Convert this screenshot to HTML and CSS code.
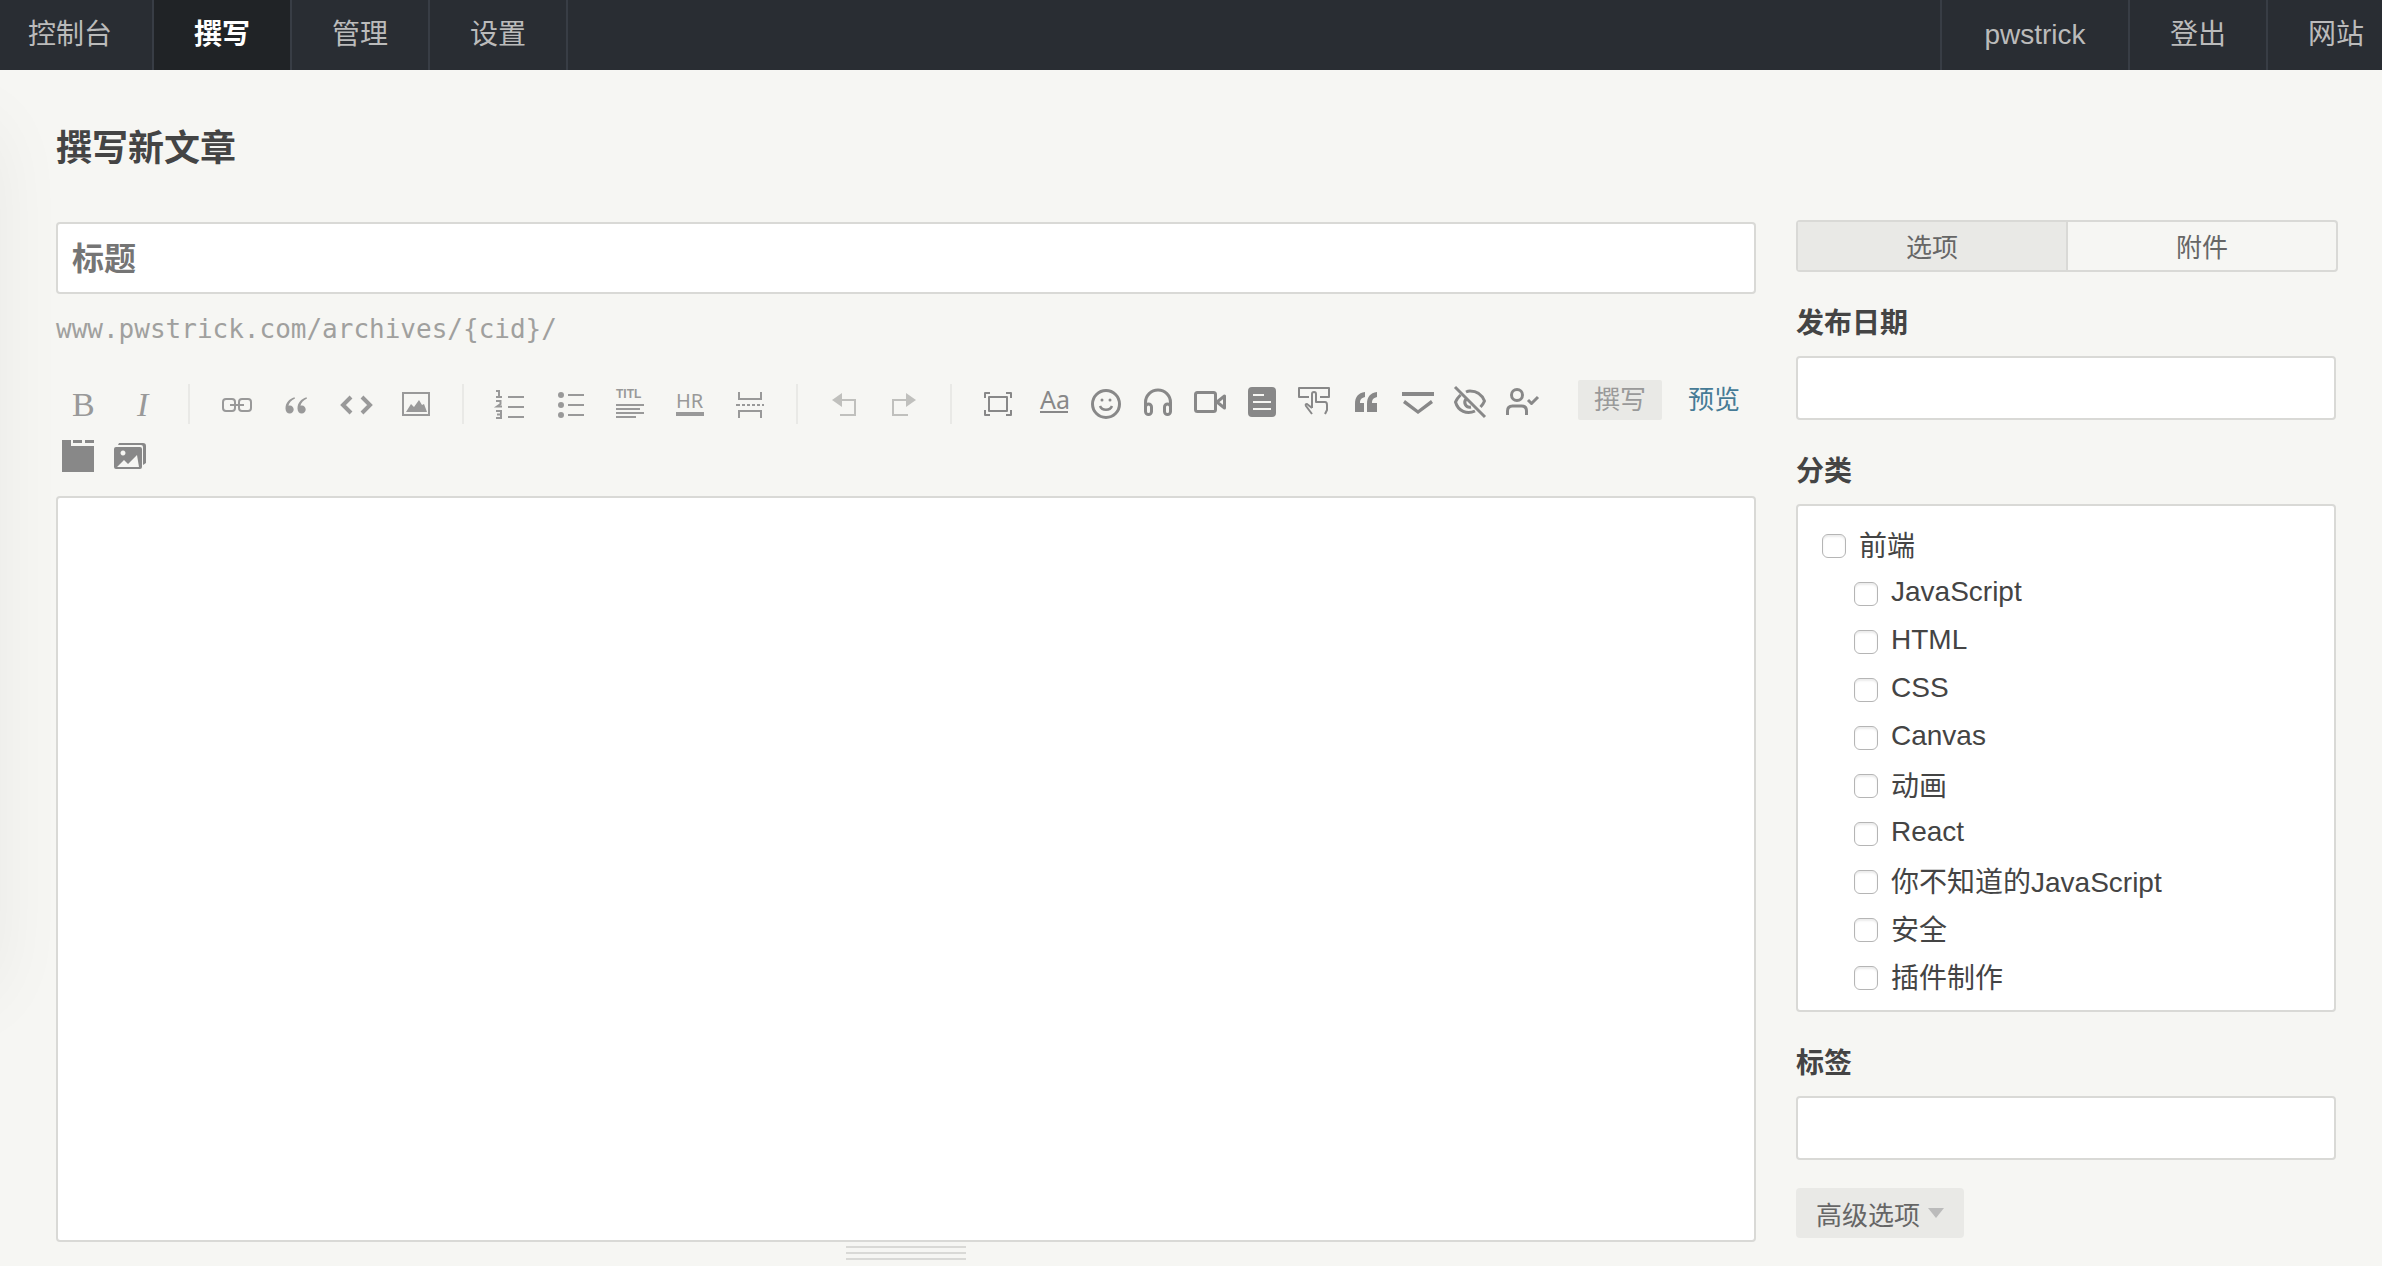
FILE: index.html
```html
<!DOCTYPE html>
<html lang="zh-CN">
<head>
<meta charset="utf-8">
<title>撰写新文章</title>
<meta name="viewport" content="width=device-width, initial-scale=1">
<link rel="stylesheet" href="styles.css">
</head>
<body>
<nav class="topnav">
  <div class="topnav-group">
    <a class="topnav-item topnav-first" href="#">控制台</a>
    <a class="topnav-item is-active" href="#">撰写</a>
    <a class="topnav-item" href="#">管理</a>
    <a class="topnav-item" href="#">设置</a>
  </div>
  <div class="topnav-group topnav-right">
    <a class="topnav-item topnav-user" href="#">pwstrick</a>
    <a class="topnav-item" href="#">登出</a>
    <a class="topnav-item topnav-last" href="#">网站</a>
  </div>
</nav>
<main class="page">
  <h1 class="page-title">撰写新文章</h1>
  <form class="columns">
    <section class="editor">
      <input class="field title-field" type="text" placeholder="标题" aria-label="标题">
      <p class="slug">www.pwstrick.com/archives/{cid}/</p>
      <div class="editbar">
        <div class="toolbar">
          <button class="tool" type="button" aria-label="加粗"><svg viewBox="0 0 40 40"><text class="serif" x="10" y="32">B</text></svg></button>
          <button class="tool" type="button" aria-label="斜体"><svg viewBox="0 0 40 40"><text class="serif italic" x="15" y="32">I</text></svg></button>
          <span class="divider"></span>
          <button class="tool" type="button" aria-label="链接"><svg viewBox="0 0 40 40" class="line"><rect x="7" y="15" width="12" height="12" rx="3"/><rect x="23" y="15" width="12" height="12" rx="3"/><path d="M14 21h14"/></svg></button>
          <button class="tool" type="button" aria-label="引用"><svg viewBox="0 0 40 40"><path d="M18.500 13.300C13 15 9.500 19 9.500 24.500c0 3 1.800 5 4.200 5 2.300 0 4-1.700 4-4s-1.700-4-3.800-4c-.7 0-1.200.2-1.500.3.600-3 2.800-5.700 6.600-7.400z"/><path d="M30.500 13.300C25 15 21.500 19 21.500 24.500c0 3 1.800 5 4.200 5 2.300 0 4-1.700 4-4s-1.700-4-3.800-4c-.7 0-1.200.2-1.500.3.600-3 2.800-5.700 6.600-7.400z"/></svg></button>
          <button class="tool" type="button" aria-label="代码"><svg viewBox="0 0 40 40" class="line thick"><path d="M15 13l-8 8 8 8M26 13l8 8-8 8"/></svg></button>
          <button class="tool" type="button" aria-label="图片"><svg viewBox="0 0 40 40"><path fill-rule="evenodd" d="M6 8h28v24H6zM8 10v20h24V10z"/><path d="M10 28l5-8 3 3 5-7 3 5 2-1 3 8z"/></svg></button>
          <span class="divider"></span>
          <button class="tool" type="button" aria-label="有序列表"><svg viewBox="0 0 40 40"><path d="M18 12h16v2H18zM18 22h16v2H18zM18 32h16v2H18z"/><path class="digits" d="M6 7h3v6M6 13h6M6 17h4.500v3L7 22.500h5M6 27h5v7H6M7 30.500h4"/></svg></button>
          <button class="tool" type="button" aria-label="无序列表"><svg viewBox="0 0 40 40"><circle cx="11" cy="11" r="3"/><circle cx="11" cy="21" r="3"/><circle cx="11" cy="31" r="3"/><path d="M18 10h16v2H18zM18 20h16v2H18zM18 30h16v2H18z"/></svg></button>
          <button class="tool" type="button" aria-label="标题"><svg viewBox="0 0 40 40"><text class="tiny" x="6" y="14">TITL</text><path d="M6 20h28v2H6zM6 24h24v2H6zM6 28h28v2H6zM6 32h20v2H6z"/></svg></button>
          <button class="tool" type="button" aria-label="分割线"><svg viewBox="0 0 40 40"><text class="small" x="6" y="24">HR</text><path d="M6 28h28v4H6z"/></svg></button>
          <button class="tool" type="button" aria-label="摘要分割线"><svg viewBox="0 0 40 40"><path d="M8 8h2v6h20V8h2v8H8zM8 26h24v8h-2v-6H10v6H8zM6 20h4v2H6zM12 20h3v2h-3zM17 20h3v2h-3zM22 20h3v2h-3zM27 20h3v2h-3zM32 20h2v2h-2z"/></svg></button>
          <span class="divider"></span>
          <button class="tool is-faint" type="button" aria-label="撤销"><svg viewBox="0 0 40 40"><path d="M8 16l10-7v14z"/><path d="M18 15h14v17H16v-2h14V17H18z"/></svg></button>
          <button class="tool is-faint" type="button" aria-label="重做"><svg viewBox="0 0 40 40"><path d="M32 16l-10-7v14z"/><path d="M22 15H8v17h16v-2H10V17h12z"/></svg></button>
          <span class="divider"></span>
          <button class="tool is-dark" type="button" aria-label="全屏"><svg viewBox="0 0 40 40" class="line"><path d="M11 13h18v14H11zM7 14V9h5M28 9h5v5M33 26v5h-5M12 31H7v-5"/></svg></button>
          <button class="tool tool-extra" type="button" aria-label="字体"><svg viewBox="0 0 40 40"><text class="font-sample" x="6" y="25">Aa</text><path d="M6 27h28v2H6z"/></svg></button>
          <button class="tool tool-extra" type="button" aria-label="表情"><svg viewBox="0 0 40 40" class="line"><circle class="ring" cx="20" cy="20" r="13.500"/><circle class="dot" cx="16" cy="16" r="1.500"/><circle class="dot" cx="24" cy="16" r="1.500"/><path d="M14 22c2 5 10 5 12 0" stroke-width="2.500"/></svg></button>
          <button class="tool tool-extra" type="button" aria-label="音频"><svg viewBox="0 0 40 40" class="line heavy"><path d="M7.500 24v-5.500a12.500 12.500 0 0 1 25 0V24"/><rect x="7.500" y="20" width="6" height="10.500" rx="3"/><rect x="26.500" y="20" width="6" height="10.500" rx="3"/></svg></button>
          <button class="tool tool-extra" type="button" aria-label="视频"><svg viewBox="0 0 40 40" class="line heavy"><rect x="5.500" y="8.500" width="20" height="19" rx="2"/><path d="M27 18l7.500-6v12z"/></svg></button>
          <button class="tool tool-extra" type="button" aria-label="文档"><svg viewBox="0 0 40 40"><path fill-rule="evenodd" d="M10 3h20a4 4 0 0 1 4 4v22a4 4 0 0 1-4 4H10a4 4 0 0 1-4-4V7a4 4 0 0 1 4-4zM11 10v2h11v-2zM11 17v2h18v-2zM11 24v2h18v-2z"/></svg></button>
          <button class="tool tool-extra" type="button" aria-label="按钮"><svg viewBox="0 0 40 40" class="line"><path d="M15 13H5V4h30v9h-9"/><path d="M18 24V10q0-2 2-2t2 2v8h9q2 0 2 3v5l-2 4M18 24l-5-4q-2 0-1 2l6 8"/></svg></button>
          <button class="tool tool-extra" type="button" aria-label="引文"><svg viewBox="0 0 40 40"><path d="M19 8C12 9 9 13 9 20v8h9v-9h-4c0-3 1-5 5-6zM31 8c-7 1-10 5-10 12v8h10v-9h-5c0-3 1-5 5-6z"/></svg></button>
          <button class="tool tool-extra" type="button" aria-label="折叠"><svg viewBox="0 0 40 40"><path d="M4 8h32v4H4zM7 16l13 10 13-10 2 3-15 11L5 19z"/></svg></button>
          <button class="tool tool-extra" type="button" aria-label="隐藏"><svg viewBox="0 0 40 40" class="line heavy"><path d="M5 3l30 30M16 8q2-1 4-1c7 0 12 4 14.500 10-1 2.500-2 4-4 6M25 27c-8 4-17 0-19.500-9 1-3 3-5 5-7M16 15c-3 4 0 9 5 8"/></svg></button>
          <button class="tool tool-extra" type="button" aria-label="作者"><svg viewBox="0 0 40 40" class="line heavy"><circle cx="15" cy="11" r="5.500"/><path d="M5.500 31v-4q0-5 5-5h9q5 0 5 5v4M26 16l3.500 3.500L36 13"/></svg></button>
          <button class="tool tool-extra" type="button" aria-label="标签页"><svg viewBox="0 0 40 40"><path d="M4 4h9v6h23v26H4zM15 4h9v3h-9zM27 4h9v3h-9z"/></svg></button>
          <button class="tool tool-extra" type="button" aria-label="相册"><svg viewBox="0 0 40 40"><path fill-rule="evenodd" d="M6 11h24a2 2 0 0 1 2 2v18a2 2 0 0 1-2 2H6a2 2 0 0 1-2-2V13a2 2 0 0 1 2-2zM13 14.500a2.500 2.500 0 1 0 .01 0zM7 31h22l-2-12-9 9-4-4z"/><path d="M8 9l1-2h24a3 3 0 0 1 3 3v17l-3 2V11q0-2-2-2z"/></svg></button>
        </div>
        <div class="modes">
          <button class="mode is-active" type="button">撰写</button>
          <button class="mode" type="button">预览</button>
        </div>
      </div>
      <textarea class="field content-field" aria-label="内容"></textarea>
      <div class="grip"></div>
    </section>
    <aside class="options">
      <div class="tabs">
        <button class="tab is-active" type="button">选项</button>
        <button class="tab" type="button">附件</button>
      </div>
      <label class="caption" for="date">发布日期</label>
      <input class="field text-field" id="date" type="text">
      <div class="caption" id="category-caption">分类</div>
      <ul class="categories" aria-labelledby="category-caption">
        <li><label class="category"><input class="check" type="checkbox">前端</label>
          <ul class="subcategories">
            <li><label class="category"><input class="check" type="checkbox">JavaScript</label></li>
            <li><label class="category"><input class="check" type="checkbox">HTML</label></li>
            <li><label class="category"><input class="check" type="checkbox">CSS</label></li>
            <li><label class="category"><input class="check" type="checkbox">Canvas</label></li>
            <li><label class="category"><input class="check" type="checkbox">动画</label></li>
            <li><label class="category"><input class="check" type="checkbox">React</label></li>
            <li><label class="category"><input class="check" type="checkbox">你不知道的JavaScript</label></li>
            <li><label class="category"><input class="check" type="checkbox">安全</label></li>
            <li><label class="category"><input class="check" type="checkbox">插件制作</label></li>
          </ul>
        </li>
      </ul>
      <label class="caption" for="tags">标签</label>
      <input class="field text-field" id="tags" type="text">
      <button class="advanced" type="button">高级选项<span class="caret"></span></button>
    </aside>
  </form>
</main>
</body>
</html>
```
FILE: styles.css
```css
*, *::before, *::after { box-sizing: border-box; }

body {
  position: relative;
  margin: 0;
  overflow-x: hidden;
  background: #f6f6f3;
  color: #444;
  font-family: "Liberation Sans", "Noto Sans CJK SC", sans-serif;
  font-size: 28px;
}

/* soft shade along the left edge of the window */
body::before {
  content: "";
  position: absolute;
  top: 140px;
  left: -80px;
  width: 60px;
  height: 840px;
  box-shadow: 0 0 80px 10px rgba(0, 0, 0, .07);
}

button, input, textarea { margin: 0; font: inherit; color: inherit; }
button { padding: 0; border: 0; background: none; cursor: pointer; }
ul { margin: 0; padding: 0; list-style: none; }

/* top navigation */
.topnav {
  position: relative;
  display: flex;
  justify-content: space-between;
  height: 70px;
  background: #292d33;
}
.topnav-group { display: flex; }
.topnav-item {
  padding: 0 40px;
  border-right: 2px solid #383d45;
  color: #bbb;
  line-height: 70px;
  text-align: center;
  text-decoration: none;
}
.topnav-item.is-active { background: #202326; color: #fff; font-weight: bold; }
.topnav-first { padding-left: 28px; }
.topnav-right .topnav-item { border-right: 0; border-left: 2px solid #383d45; }
.topnav-user { min-width: 188px; }
.topnav-last { padding-right: 18px; }

/* page frame */
.page { position: relative; padding: 52px 46px 0 56px; }
.page-title { margin: 0 0 44px; font-size: 36px; line-height: 54px; }
.columns {
  display: grid;
  grid-template-columns: minmax(0, 1fr) 540px;
  gap: 40px;
}

.field {
  display: block;
  width: 100%;
  border: 2px solid #d9d9d6;
  border-radius: 4px;
  background: #fff;
  outline: 0;
}

/* editor */
.editor { padding-top: 2px; }
.title-field { height: 72px; padding: 2px 14px 0; font-size: 32px; font-weight: bold; }
.title-field::placeholder { color: #757575; }
.slug {
  margin: 16px 0 30px;
  color: #a0a09e;
  font-family: "DejaVu Sans Mono", monospace;
  font-size: 26px;
  line-height: 38px;
}
.editbar { display: flex; align-items: flex-start; margin-bottom: 14px; }
.toolbar { display: flex; flex: 1; flex-wrap: wrap; margin-left: -4px; }
.tool { display: grid; place-items: center; width: 60px; height: 52px; color: #999; }
.tool-extra { width: 52px; color: #888; }
.is-dark { color: #888; }
.is-faint { color: #c0c0bd; }
.divider { width: 2px; height: 40px; margin: 6px 16px; background: #e9e9e6; }

.tool svg {
  display: block;
  width: 40px;
  height: 40px;
  overflow: visible;
  fill: currentColor;
}
.tool .line {
  fill: none;
  stroke: currentColor;
  stroke-width: 2;
  stroke-linejoin: round;
}
.tool .thick { stroke-width: 4; stroke-linejoin: miter; }
.tool .heavy { stroke-width: 3; }
.ring { stroke-width: 3; }
.dot { fill: currentColor; stroke: none; }
.digits { fill: none; stroke: currentColor; stroke-width: 2; }
.serif { font-family: "Liberation Serif", serif; font-size: 34px; }
.italic { font-style: italic; }
.tiny { font-size: 12px; font-weight: bold; }
.small { font-family: "Noto Sans", sans-serif; font-size: 20px; }
.font-sample { font-family: "Noto Sans", sans-serif; font-size: 25px; }

.modes { display: flex; gap: 10px; padding-top: 2px; }
.mode {
  width: 84px;
  height: 40px;
  border-radius: 2px;
  color: #467b96;
  font-size: 26px;
  line-height: 36px;
}
.mode.is-active { background: #e9e9e6; color: #999; }

.content-field { height: 746px; padding: 14px; resize: none; }
.grip {
  width: 120px;
  height: 14px;
  margin: 4px auto 0;
  background: repeating-linear-gradient(#d9d9d6 0 2px, transparent 2px 6px);
}

/* options column */
.tabs {
  display: flex;
  height: 52px;
  margin-right: -2px;
  border: 2px solid #d9d9d6;
  border-radius: 4px;
}
.tab { flex: 1; padding-bottom: 2px; color: #666; font-size: 26px; }
.tab.is-active { border-right: 2px solid #d9d9d6; background: #e9e9e6; }
.caption { display: block; margin: 30px 0 10px; font-weight: bold; line-height: 44px; }
.text-field { height: 64px; padding: 0 14px; }
.categories {
  padding: 14px 24px 10px;
  border: 2px solid #d9d9d6;
  border-radius: 4px;
  background: #fff;
}
.subcategories { padding-left: 32px; }
.category { display: flex; align-items: center; gap: 13px; height: 48px; }
.check {
  flex: none;
  width: 24px;
  height: 24px;
  margin-top: 4px;
  border: 1px solid #b5b5b5;
  border-radius: 6px;
  background: #fff;
  box-shadow: inset 0 2px 2px rgba(0, 0, 0, .08);
  appearance: none;
}
.check:checked { background: #467b96; }
.advanced {
  display: flex;
  align-items: center;
  gap: 8px;
  height: 50px;
  margin-top: 28px;
  padding: 0 20px;
  border-radius: 4px;
  background: #e9e9e6;
  color: #666;
  font-size: 26px;
}
.caret {
  border: 8px solid transparent;
  border-top: 10px solid #bbb;
  border-bottom: 0;
}
```
